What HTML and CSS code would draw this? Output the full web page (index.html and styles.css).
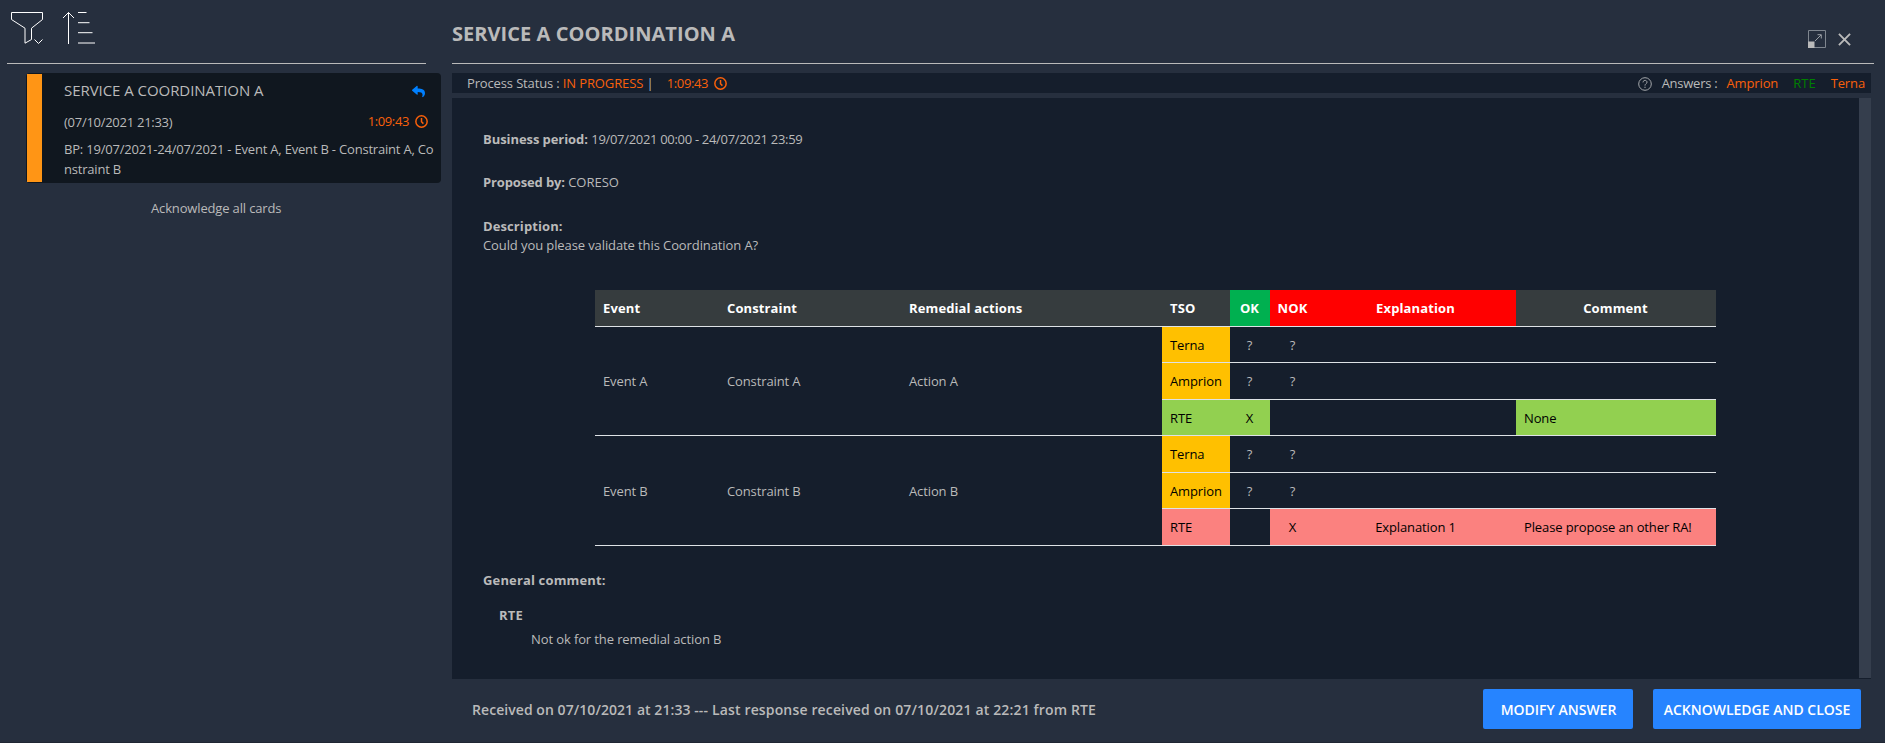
FILE: index.html
```html
<!DOCTYPE html>
<html lang="en">
<head>
<meta charset="utf-8">
<title>Service A Coordination A</title>
<link rel="stylesheet" href="styles.css">
</head>
<body>
<div class="app">
  <aside class="feed">
    <div class="feed-tools">
      <svg class="tool-filter" width="34" height="34" viewBox="0 0 34 34" fill="none" stroke="#fff"><path d="M1.5 1.5H32.500V8.500L21.500 17.200V28.500L15 32.200V17.200L1.500 8.500Z"/><path d="M24.500 28.500L28.500 32.500L32.500 28.500"/></svg>
      <svg class="tool-sort" width="34" height="34" viewBox="0 0 34 34" fill="none" stroke="#fff"><path d="M6.500 33V1.500M1 7L6.500 1.500L12 7M16 1.500H24.500M16 11.700H27.500M16 21.700H30.500M16 32H33"/></svg>
    </div>
    <div class="card">
      <div class="card-severity"></div>
      <div class="card-body">
        <div class="card-row card-head"><span>SERVICE A COORDINATION A</span>
          <svg class="reply" width="13" height="13" viewBox="0 0 512 512" fill="#0080ff"><path d="M8.300 189.800L184.300 37.800C199.700 24.500 224 35.300 224 56V136C384.600 137.900 512 170.100 512 322.300C512 383.700 472.400 444.600 428.700 476.400C415 486.400 395.600 473.900 400.600 457.700C445.900 312.800 379.100 274.300 224 272V360C224 380.700 199.700 391.500 184.300 378.200L8.300 226.200C-2.700 216.600-2.700 199.300 8.300 189.800Z"/></svg>
        </div>
        <div class="card-row card-date"><span class="published">(07/10/2021 21:33)</span>
          <span class="countdown">1:09:43 <svg class="clock" width="13" height="13" viewBox="0 0 13 13" fill="none" stroke="currentColor" stroke-width="1.500"><circle cx="6.500" cy="6.500" r="5.650"/><path d="M6.500 3V6.700L8.400 8.600"/></svg></span>
        </div>
        <p class="card-summary">BP: 19/07/2021-24/07/2021 - Event A, Event B - Constraint A, Constraint B</p>
      </div>
    </div>
    <a class="ack-all">Acknowledge all cards</a>
  </aside>

  <main class="detail">
    <header class="detail-head">
      <h1>SERVICE A COORDINATION A</h1>
      <div class="window-tools">
        <svg width="18" height="18" viewBox="0 0 18 18" fill="none"><path d="M.5 .5H17.500V17.500H.5Z" stroke="#7f868f"/><path d="M0 11.500H6.500V18H0Z" fill="#bababa"/><path d="M7 11L13 5M9.500 4.700H13.300V8.500" stroke="#9a9fa5"/></svg>
        <svg width="13" height="13" viewBox="0 0 14 14" fill="none" stroke="#bababa" stroke-width="2"><path d="M1 1L13 13M13 1L1 13"/></svg>
      </div>
    </header>
    <div class="status">
      <div><span class="status-label">Process Status : </span><span class="orange tight">IN PROGRESS</span> |</div>
      <span class="countdown status-time">1:09:43 <svg class="clock" width="13" height="13" viewBox="0 0 13 13" fill="none" stroke="currentColor" stroke-width="1.500"><circle cx="6.500" cy="6.500" r="5.650"/><path d="M6.500 3V6.700L8.400 8.600"/></svg></span>
      <div class="answers">
        <svg width="14" height="14" viewBox="0 0 14 14" fill="none" stroke="#a4a7ab"><circle cx="7" cy="7" r="6.300"/><path d="M5 5.400C5 2.700 9 2.800 9 5.200C9 6.700 7 6.700 7 8.600M7 9.700V11"/></svg>
        <span class="answers-label">Answers :</span><span class="orange tight">Amprion</span><span class="green">RTE</span><span class="orange tight">Terna</span>
      </div>
    </div>
    <section class="panel">
      <div class="content">
        <p><b class="label-period">Business period:</b> <span class="period">19/07/2021 00:00 - 24/07/2021 23:59</span></p>
        <p><b class="label-by">Proposed by:</b> CORESO</p>
        <p><b class="label">Description:</b><br><span class="prose">Could you please validate this Coordination A?</span></p>
        <table class="grid">
          <colgroup><col class="c-event"><col class="c-constraint"><col class="c-action"><col class="c-tso"><col class="c-ok"><col class="c-nok"><col class="c-text"><col class="c-text"></colgroup>
          <thead><tr><th>Event</th><th>Constraint</th><th>Remedial actions</th><th>TSO</th><th class="ok mid">OK</th><th class="nok mid">NOK</th><th class="nok mid">Explanation</th><th class="mid">Comment</th></tr></thead>
          <tbody>
            <tr><td rowspan="3">Event A</td><td rowspan="3">Constraint A</td><td rowspan="3">Action A</td><td class="wait">Terna</td><td class="mid">?</td><td class="mid">?</td><td></td><td></td></tr>
            <tr><td class="wait">Amprion</td><td class="mid">?</td><td class="mid">?</td><td></td><td></td></tr>
            <tr><td class="yes">RTE</td><td class="yes mid">X</td><td></td><td></td><td class="yes">None</td></tr>
            <tr><td rowspan="3">Event B</td><td rowspan="3">Constraint B</td><td rowspan="3">Action B</td><td class="wait">Terna</td><td class="mid">?</td><td class="mid">?</td><td></td><td></td></tr>
            <tr><td class="wait">Amprion</td><td class="mid">?</td><td class="mid">?</td><td></td><td></td></tr>
            <tr><td class="no">RTE</td><td></td><td class="no mid">X</td><td class="no mid">Explanation 1</td><td class="no">Please propose an other RA!</td></tr>
          </tbody>
        </table>
        <div class="general"><b>General comment:</b></div>
        <div class="entity"><b>RTE</b></div>
        <div class="remark">Not ok for the remedial action B</div>
      </div>
      <div class="scrollbar"></div>
    </section>
    <footer class="foot">
      <span class="received">Received on 07/10/2021 at 21:33 <span class="last">--- Last response received on 07/10/2021 at 22:21 from RTE</span></span>
      <button class="btn btn-modify">MODIFY ANSWER</button>
      <button class="btn btn-close">ACKNOWLEDGE AND CLOSE</button>
    </footer>
  </main>
</div>
</body>
</html>
```
FILE: styles.css
```css
* { box-sizing: border-box; }
body { margin: 0; background: #262f3e; color: #bababa; font: 13px/19.5px "Open Sans", sans-serif; }
p, h1 { margin: 0; }
svg { display: block; flex: none; }
.app { display: flex; height: 743px; overflow: hidden; border-bottom: 1px solid #1f2633; }

.feed { width: 452px; flex: none; display: flex; flex-direction: column; }
.feed-tools { display: flex; gap: 18px; height: 64px; margin-left: 7px; width: 419px; padding: 11px 0 0 3px; border-bottom: 1px solid #bababa; }
.card { display: flex; margin: 9px 0 0 26px; width: 415px; height: 110px; padding: 1px; background: #10171f; border-radius: 4px; }
.card-severity { width: 15px; flex: none; background: #ff9515; }
.card-body { flex: 1; padding: 5px 4px 0 22px; }
.card-row { display: flex; justify-content: space-between; align-items: center; }
.card-head { font-size: 15px; line-height: 23px; padding-right: 11px; letter-spacing: -.05px; }
.card-date { align-items: flex-start; margin-top: 9px; line-height: 20px; padding-right: 8px; }
.published { margin-top: 1px; letter-spacing: -.27px; }
.card-summary { margin-top: 7px; line-height: 20px; word-break: break-all; letter-spacing: -.2px; }
.reply { margin-top: 1px; }
.countdown { display: flex; align-items: center; gap: 6px; color: #f9600a; letter-spacing: -.38px; }
.ack-all { margin: 16px 0 0 151px; letter-spacing: -.15px; }

.detail { flex: none; width: 1422px; }
.detail-head { display: flex; justify-content: space-between; height: 64px; border-bottom: 1px solid #bababa; }
.detail-head h1 { font-size: 20px; font-weight: 700; line-height: 30px; padding-top: 19px; letter-spacing: .05px; }
.window-tools { display: flex; align-items: center; gap: 12px; padding: 15px 23px 0 0; }
.status { display: flex; align-items: center; width: 1419px; height: 20px; margin-top: 9px; padding: 1px 6px 0 15px; background: #151e2c; }
.status-label { letter-spacing: -.14px; }
.status-time { margin-left: 13px; }
.orange { color: #f9600a; }
.green { color: #008000; }
.tight { letter-spacing: -.12px; }
.answers { display: flex; align-items: center; margin-left: auto; gap: 15px; }
.answers-label { margin: 0 -6px 0 -5px; letter-spacing: -.25px; }

.panel { display: flex; width: 1419px; height: 581px; margin-top: 5px; padding-bottom: 1px; background: #151e2c; }
.content { flex: 1; padding: 31.900px 0 0 31px; }
.content p { margin-bottom: 24px; }
.label-period { letter-spacing: -.07px; }
.label-by { letter-spacing: -.14px; }
.label { letter-spacing: .1px; }
.period { letter-spacing: -.31px; }
.prose { letter-spacing: -.1px; }
.scrollbar { width: 12px; background: #353e4d; }
.grid { width: 1121px; margin: 33.700px 0 0 112px; table-layout: fixed; border-collapse: collapse; }
.c-event { width: 124px; }
.c-constraint { width: 182px; }
.c-action { width: 261px; }
.c-tso { width: 68px; }
.c-ok { width: 40px; }
.c-nok { width: 46px; }
.c-text { width: 200px; }
.grid th, .grid td { padding: 9px 8px 7px; height: 36.500px; text-align: left; white-space: nowrap; border-bottom: 1px solid #dee2e6; letter-spacing: -.12px; }
.grid th { padding: 8.700px 8px 7.300px; background: #363c3e; color: #fff; font-weight: 700; letter-spacing: .12px; }
.grid .mid { text-align: center; padding-left: 7px; padding-right: 8px; }
.grid th.ok { background: #00b050; }
.grid th.nok { background: #f00; }
.grid .wait { background: #ffc000; color: #000; }
.grid .yes { background: #92d050; color: #000; }
.grid .no { background: #fb817f; color: #000; }
.general { margin-top: 25px; letter-spacing: .15px; }
.entity { margin: 15.500px 0 0 16px; letter-spacing: .2px; }
.remark { margin: 4.500px 0 0 48px; letter-spacing: -.11px; }

.foot { display: flex; align-items: center; height: 60px; padding: 0 13px 0 20px; }
.received { font-size: 14px; font-weight: 600; margin-right: auto; padding-top: 2px; letter-spacing: .06px; }
.last { letter-spacing: .15px; }
.btn { height: 40px; border: 0; border-radius: 2px; background: #2684ff; color: #fff; font: 600 14px/20px "Open Sans", sans-serif; padding: 2px 0 0; margin: 0; }
.btn-modify { width: 150px; margin-right: 20px; padding-left: 1px; }
.btn-close { width: 208px; }
```
